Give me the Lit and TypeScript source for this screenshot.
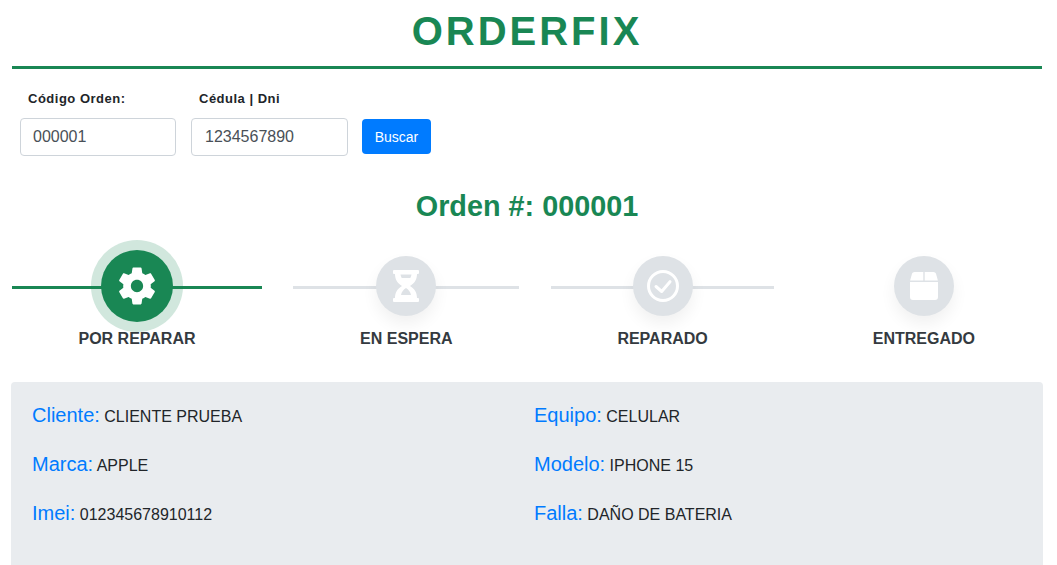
import { LitElement, html, css } from "lit";
import { customElement } from "lit/decorators.js";

const gear = html`<svg class="ic" style="width:46px;height:46px" viewBox="0 0 24 24" fill="#fff"><path d="M19.14 12.94c.04-.3.06-.61.06-.94 0-.32-.02-.64-.07-.94l2.03-1.58c.18-.14.23-.41.12-.61l-1.92-3.32c-.12-.22-.37-.29-.59-.22l-2.39.96c-.5-.38-1.03-.7-1.62-.94l-.36-2.54c-.04-.24-.24-.41-.48-.41h-3.84c-.24 0-.43.17-.47.41l-.36 2.54c-.59.24-1.13.57-1.62.94l-2.39-.96c-.22-.08-.47 0-.59.22L2.74 8.87c-.12.21-.08.47.12.61l2.03 1.58c-.05.3-.09.63-.09.94s.02.64.07.94l-2.03 1.58c-.18.14-.23.41-.12.61l1.92 3.32c.12.22.37.29.59.22l2.39-.96c.5.38 1.03.7 1.62.94l.36 2.54c.05.24.24.41.48.41h3.84c.24 0 .44-.17.47-.41l.36-2.54c.59-.24 1.13-.56 1.62-.94l2.39.96c.22.08.47 0 .59-.22l1.92-3.32c.12-.22.07-.47-.12-.61l-2.01-1.58zM12 15.2c-1.77 0-3.2-1.43-3.2-3.2s1.43-3.2 3.2-3.2 3.2 1.43 3.2 3.2-1.43 3.2-3.2 3.2z"/></svg>`;
const hourglass = html`<svg class="ic" style="width:26px;height:32px" viewBox="0 0 26 32" fill="#fff" fill-rule="evenodd"><path d="M1 0h24a1 1 0 0 1 1 1v2a1 1 0 0 1-1 1h-1c0 5-2 9-7 12 5 3 7 7 7 12h1a1 1 0 0 1 1 1v2a1 1 0 0 1-1 1H1a1 1 0 0 1-1-1v-2a1 1 0 0 1 1-1h1c0-5 2-9 7-12C4 13 2 9 2 4H1a1 1 0 0 1-1-1V1a1 1 0 0 1 1-1zM7.500 4.500c.2 1.300.6 2.500 1.200 3.500h8.600c.6-1 1-2.200 1.200-3.500zM13 18c-2.600 1.500-4.400 4-5 7h10c-.6-3-2.400-5.500-5-7z"/></svg>`;
const check = html`<svg class="ic" style="width:32px;height:32px" viewBox="0 0 32 32" fill="none" stroke="#fff"><circle cx="16" cy="16" r="14.500" stroke-width="3"/><path d="M9 16.500l5.700 5 8.300-9.800" stroke-width="3" stroke-linecap="round" stroke-linejoin="round"/></svg>`;
const box = html`<svg class="ic" style="width:28px;height:28px" viewBox="0 0 28 28" fill="#fff"><path d="M4.500 0h8.800v8.500H0.100L2 1.800C2.400 .7 3.400 0 4.500 0zM14.700 0h8.800c1.100 0 2.100.7 2.500 1.800L27.900 8.500H14.700zM0 10h28v15a3 3 0 0 1-3 3H3a3 3 0 0 1-3-3z"/></svg>`;

const steps = [
  { label: "POR REPARAR", icon: gear, active: true, line: true },
  { label: "EN ESPERA", icon: hourglass, active: false, line: true },
  { label: "REPARADO", icon: check, active: false, line: true },
  { label: "ENTREGADO", icon: box, active: false, line: false },
];

const fields = [
  ["Cliente:", "CLIENTE PRUEBA"],
  ["Equipo:", "CELULAR"],
  ["Marca:", "APPLE"],
  ["Modelo:", "IPHONE 15"],
  ["Imei:", "012345678910112"],
  ["Falla:", "DAÑO DE BATERIA"],
];

@customElement("app-root")
export class AppRoot extends LitElement {
  static styles = css`
    :host {
      display: flex;
      flex-direction: column;
      height: 565px;
      overflow: hidden;
      box-sizing: border-box;
      padding: 0 15px 0 12px;
      font-family: "Liberation Sans", Arial, sans-serif;
      color: #212529;
      background: #fff;
    }
    .title {
      margin: 0;
      height: 66px;
      line-height: 62px;
      text-align: center;
      font-size: 40px;
      font-weight: 700;
      letter-spacing: 3px;
      color: #198754;
      border-bottom: 3px solid #198754;
    }
    .search {
      display: flex;
      align-items: flex-end;
      padding: 22px 0 0 8px;
    }
    .field {
      display: flex;
      flex-direction: column;
      margin-right: 15px;
    }
    .field label {
      font-size: 13px;
      font-weight: 700;
      line-height: 16px;
      letter-spacing: 0.5px;
      margin: 0 0 11px 8px;
    }
    .field input {
      box-sizing: border-box;
      height: 38px;
      padding: 0 12px;
      font: 16px "Liberation Sans", Arial, sans-serif;
      color: #495057;
      border: 1px solid #ced4da;
      border-radius: 4px;
      background: #fff;
      outline: none;
    }
    .f1 input { width: 156px; }
    .f2 input { width: 157px; padding-left: 13px; }
    button {
      box-sizing: border-box;
      width: 69px;
      height: 35px;
      margin: 0 0 2px -1px;
      border: none;
      border-radius: 4px;
      background: #007bff;
      color: #fff;
      font: 14px "Liberation Sans", Arial, sans-serif;
    }
    .order {
      margin: 0;
      padding-top: 33px;
      text-align: center;
      font-size: 28.8px;
      line-height: 34px;
      font-weight: 700;
      color: #198754;
    }
    .steps {
      display: grid;
      grid-template-columns: 250px 226.2px 223px 1fr;
      column-gap: 31.2px;
      height: 142px;
      margin-top: 17px;
    }
    .step {
      display: flex;
      flex-direction: column;
      align-items: center;
      position: relative;
    }
    .step:nth-child(n + 3) { padding-left: 1px; }
    .line {
      position: absolute;
      left: 0;
      right: 0;
      top: 46px;
      height: 3px;
      background: #dee2e6;
    }
    .step.active .line { background: #198754; }
    .holder {
      width: 92px;
      height: 92px;
      display: flex;
      align-items: center;
      justify-content: center;
      position: relative;
    }
    .circle {
      width: 60px;
      height: 60px;
      border-radius: 50%;
      background: #dee2e6;
      box-shadow: 0 8px 16px rgba(0, 0, 0, 0.06);
      display: flex;
      align-items: center;
      justify-content: center;
    }
    .step.active .circle {
      width: 72px;
      height: 72px;
      background: #198754;
      box-shadow: 0 0 0 10px rgba(25, 135, 84, 0.2);
    }
    .ic { display: block; }
    .name {
      font-size: 16px;
      line-height: 20px;
      font-weight: 700;
      color: #343a40;
      margin-top: -3px;
    }
    .panel {
      flex: 1;
      margin: 0 -1px;
      padding: 21px 21px 0;
      display: grid;
      grid-template-columns: 502px 1fr;
      grid-auto-rows: 49px;
      background: #e9ecef;
      border-radius: 4px 4px 0 0;
    }
    .item { font-size: 16px; line-height: 24px; }
    .item b {
      font-weight: 400;
      font-size: 20px;
      color: #007bff;
    }
  `;

  render() {
    return html`
      <h1 class="title">ORDERFIX</h1>
      <div class="search">
        <div class="field f1">
          <label>Código Orden:</label>
          <input value="000001" />
        </div>
        <div class="field f2">
          <label>Cédula | Dni</label>
          <input value="1234567890" />
        </div>
        <button>Buscar</button>
      </div>
      <h2 class="order">Orden #: 000001</h2>
      <div class="steps">
        ${steps.map(
          (s) => html`<div class="step ${s.active ? "active" : ""}">
            ${s.line ? html`<div class="line"></div>` : ""}
            <div class="holder"><div class="circle">${s.icon}</div></div>
            <div class="name">${s.label}</div>
          </div>`
        )}
      </div>
      <div class="panel">
        ${fields.map(([k, v]) => html`<div class="item"><b>${k}</b> ${v}</div>`)}
      </div>
    `;
  }
}
